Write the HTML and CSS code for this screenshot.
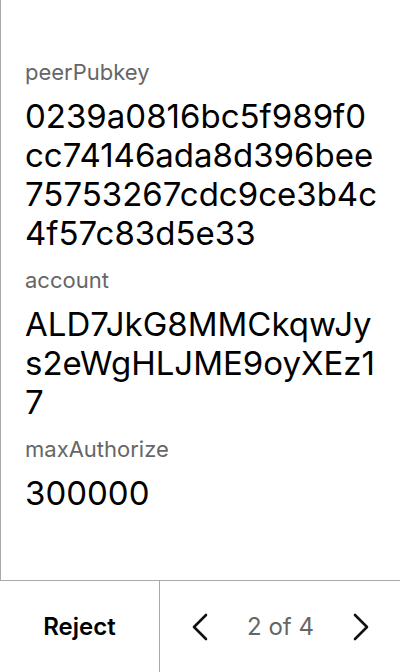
FILE: index.html
```html
<!DOCTYPE html>
<html>
<head>
<meta charset="utf-8">
<link rel="stylesheet" href="styles.css">
</head>
<body>
<div class="screen">
  <main class="content">
    <div class="field">
      <div class="label">peerPubkey</div>
      <div class="value">0239a0816bc5f989f0cc74146ada8d396bee75753267cdc9ce3b4c4f57c83d5e33</div>
    </div>
    <div class="field">
      <div class="label">account</div>
      <div class="value">ALD7JkG8MMCkqwJys2eWgHLJME9oyXEz17</div>
    </div>
    <div class="field">
      <div class="label">maxAuthorize</div>
      <div class="value">300000</div>
    </div>
  </main>
  <footer class="footer">
    <button class="reject">Reject</button>
    <div class="pager">
      <svg class="chev" width="16" height="28" viewBox="0 0 16 28"><path d="M14 2 L2 14 L14 26" fill="none" stroke="#111" stroke-width="2.6" stroke-linecap="round" stroke-linejoin="round"/></svg>
      <span class="count">2 of 4</span>
      <svg class="chev" width="16" height="28" viewBox="0 0 16 28"><path d="M2 2 L14 14 L2 26" fill="none" stroke="#111" stroke-width="2.6" stroke-linecap="round" stroke-linejoin="round"/></svg>
    </div>
  </footer>
</div>
</body>
</html>
```
FILE: styles.css
```css
* { box-sizing: border-box; }
html, body { margin: 0; padding: 0; background: #fff; }
body { font-family: Inter, "Noto Sans", sans-serif; }
.screen { width: 400px; height: 672px; display: flex; flex-direction: column; }
.content {
  flex: 1;
  border-left: 1px solid #aaa;
  padding: 57px 20px 0 24px;
  display: flex;
  flex-direction: column;
  gap: 12px;
}
.field { display: flex; flex-direction: column; gap: 10px; }
.label { font-size: 22px; line-height: 30px; color: #666; }
.value { font-size: 33px; line-height: 39px; color: #000; word-break: break-all; }
.footer {
  height: 92px;
  border-top: 1px solid #aaa;
  display: flex;
}
.reject {
  width: 160px;
  border: none;
  border-right: 1px solid #aaa;
  background: #fff;
  font-family: Inter, sans-serif;
  font-size: 24px;
  font-weight: 600;
  color: #000;
  padding: 0;
}
.pager { flex: 1; display: flex; align-items: center; justify-content: space-between; padding: 0 31px 0 32px; }
.count { font-size: 24px; color: #666; }
.chev { display: block; }
```
